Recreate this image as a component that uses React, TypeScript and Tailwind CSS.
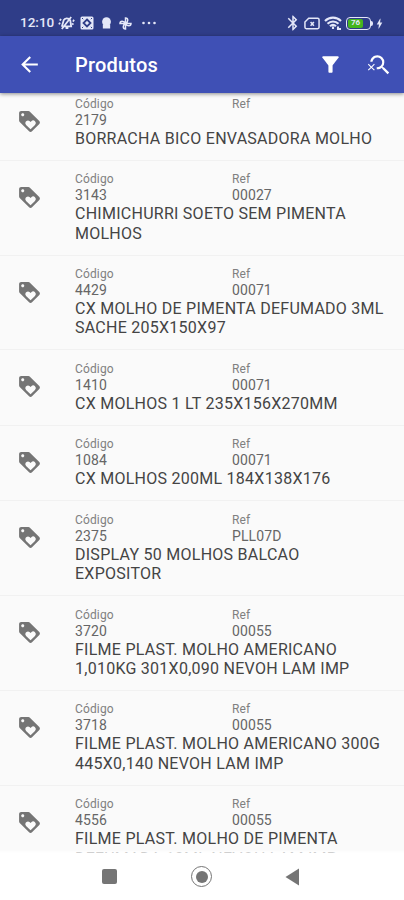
import { MdArrowBack, MdBluetooth, MdBolt, MdFilterAlt, MdLoyalty, MdSearchOff } from 'react-icons/md';

type Product = {
  code: string;
  ref: string;
  name: string[];
};

const PRODUCTS: Product[] = [
  { code: '2179', ref: '', name: ['BORRACHA BICO ENVASADORA MOLHO'] },
  { code: '3143', ref: '00027', name: ['CHIMICHURRI SOETO SEM PIMENTA', 'MOLHOS'] },
  { code: '4429', ref: '00071', name: ['CX MOLHO DE PIMENTA DEFUMADO 3ML', 'SACHE 205X150X97'] },
  { code: '1410', ref: '00071', name: ['CX MOLHOS 1 LT 235X156X270MM'] },
  { code: '1084', ref: '00071', name: ['CX MOLHOS 200ML 184X138X176'] },
  { code: '2375', ref: 'PLL07D', name: ['DISPLAY 50 MOLHOS BALCAO', 'EXPOSITOR'] },
  { code: '3720', ref: '00055', name: ['FILME PLAST. MOLHO AMERICANO', '1,010KG 301X0,090 NEVOH LAM IMP'] },
  { code: '3718', ref: '00055', name: ['FILME PLAST. MOLHO AMERICANO 300G', '445X0,140 NEVOH LAM IMP'] },
  { code: '4556', ref: '00055', name: ['FILME PLAST. MOLHO DE PIMENTA', 'DEFUMADA 10ML NEVOH LAM IMP'] },
];

function StatusBar() {
  return (
    <div className="flex h-[36px] shrink-0 items-center bg-[#2f3d88] pt-[10px] pl-5 text-[#e4e7f8]">
      <span className="w-[38px] text-[13.5px] leading-none font-medium whitespace-nowrap">12:10</span>
      {/* muted bell */}
      <svg className="h-[14px] w-[17px]" viewBox="0 0 18 15" fill="none" stroke="currentColor" strokeWidth="1.9">
        <path d="M4 11.500 6 4.500c1-2.500 5-3 7 0l1 6.500H4.500M2 5l1-2M1 9l1-2M16 6l1-2M15 9l1.500-1M8 13h3M4 14 14 1" />
      </svg>
      <svg className="ml-[5px] h-[14px] w-[14px]" viewBox="0 0 14 14">
        <rect x="0.5" y="0.5" width="13" height="13" rx="1.5" fill="currentColor" />
        <path d="M7 3.500 10.500 7 7 10.500 3.500 7Z" fill="none" stroke="#2f3d88" strokeWidth="1.8" />
        <path d="M2 2l1.200 1.200M12 2l-1.200 1.200M2 12l1.200-1.200M12 12l-1.200-1.200" stroke="#2f3d88" />
      </svg>
      <svg className="ml-[7px] h-[12px] w-[11px]" viewBox="0 0 12 13" fill="currentColor">
        <circle cx="6" cy="5" r="4.8" />
        <path d="M2 8h8v4.500H2z" />
      </svg>
      <svg className="ml-[7px] h-[13px] w-[13px]" viewBox="0 0 13 13" fill="none" stroke="currentColor" strokeWidth="1.5">
        <path d="M6.500 6.500V1c3 0 3 4 0 5.500ZM6.500 6.500H12c0 3-4 3-5.500 0ZM6.500 6.500V12c-3 0-3-4 0-5.500ZM6.500 6.500H1c0-3 4-3 5.500 0Z" />
      </svg>
      <svg className="ml-[9px] h-[4px] w-[16px]" viewBox="0 0 16 4" fill="currentColor">
        <circle cx="2.5" cy="2" r="1.3" />
        <circle cx="8" cy="2" r="1.3" />
        <circle cx="13.5" cy="2" r="1.3" />
      </svg>
      <MdBluetooth className="ml-[127px] size-[18px]" />
      <svg className="ml-[2px] h-[13px] w-[16px]" viewBox="0 0 17 13" fill="none" stroke="currentColor" strokeWidth="1.6">
        <path d="M5 1h9.500q1.500 0 1.500 1.500v8q0 1.500-1.500 1.500h-12Q1 12 1 10.500V5ZM7 5l3.500 4M10.500 5L7 9" />
      </svg>
      <svg className="ml-[4px] h-[14px] w-[18px]" viewBox="0 0 18 14" fill="none" stroke="currentColor" strokeWidth="2.1">
        <path d="M1 5c4.500-4.500 11.500-4.500 16 0M3.500 7.800c3-3 8-3 11 0M6 10.300c2-2 4-2 6 0M9 10.500v2.500M14 10.500v2.500h3" />
      </svg>
      <span className="ml-[4px] flex h-[13px] w-[25px] rounded-[4px] border-[1.5px] border-current p-px">
        <span className="flex w-[15px] items-center justify-center rounded-[2px] bg-[#45b51e] text-[8px] leading-none font-bold">76</span>
      </span>
      <span className="h-[5px] w-[2px] rounded-r bg-current" />
      <MdBolt className="size-[13px]" />
    </div>
  );
}

function AppBar() {
  return (
    <header className="relative z-10 flex h-[57px] shrink-0 items-center bg-[#3f50b5] pl-[17px] text-white shadow-[0_1px_4px_rgba(0,0,0,0.45)]">
      <MdArrowBack className="size-[25px]" />
      <h1 className="ml-[33px] w-[243px] text-[20px] font-medium tracking-[0.2px]">Produtos</h1>
      <MdFilterAlt className="size-[25px]" />
      <MdSearchOff className="ml-[24px] size-[26px]" />
    </header>
  );
}

function Field({ label, value }: { label: string; value: string }) {
  return (
    <div className="w-[157px]">
      <div className="text-[12px] leading-[13px] tracking-[0.15px] text-[#808080]">{label}</div>
      <div className="h-[18px] text-[14px] leading-[18px] tracking-[0.1px] text-[#666]">{value}</div>
    </div>
  );
}

function ProductRow({ product }: { product: Product }) {
  return (
    <li className="flex border-b border-[#f1f1f1] pt-[12.5px] pb-[11.7px] pl-[16.5px]">
      <MdLoyalty className="mt-[11.5px] size-[25px] shrink-0 text-[#757575]" />
      <div className="ml-[33.5px]">
        <div className="flex">
          <Field label="Código" value={product.code} />
          <Field label="Ref" value={product.ref} />
        </div>
        {product.name.map((line) => (
          <div key={line} className="text-[16px] leading-[19.3px] tracking-[0.26px] whitespace-nowrap text-[#444]">
            {line}
          </div>
        ))}
      </div>
    </li>
  );
}

function NavBar() {
  return (
    <nav className="relative flex h-[47px] shrink-0 items-center bg-white pl-[102px] text-[#757575] shadow-[0_-1px_2px_1px_rgba(255,255,255,0.8)]">
      <span className="size-[15px] rounded-[2px] bg-current" />
      <span className="ml-[74px] flex size-[21px] items-center justify-center rounded-full border-[1.5px] border-current">
        <span className="size-[12px] rounded-full bg-current" />
      </span>
      <svg className="ml-[73px] h-[18px] w-[15px]" viewBox="0 0 15 18" fill="currentColor">
        <path d="M14 .5v17L.5 9Z" />
      </svg>
    </nav>
  );
}

export default function App() {
  return (
    <div className="flex h-[900px] w-[404px] flex-col overflow-hidden bg-[#fafafa] font-['Roboto',sans-serif]">
      <StatusBar />
      <AppBar />
      <ul className="-mt-[7.6px] min-h-0 flex-1 overflow-hidden">
        {PRODUCTS.map((product) => (
          <ProductRow key={product.code} product={product} />
        ))}
      </ul>
      <NavBar />
    </div>
  );
}
